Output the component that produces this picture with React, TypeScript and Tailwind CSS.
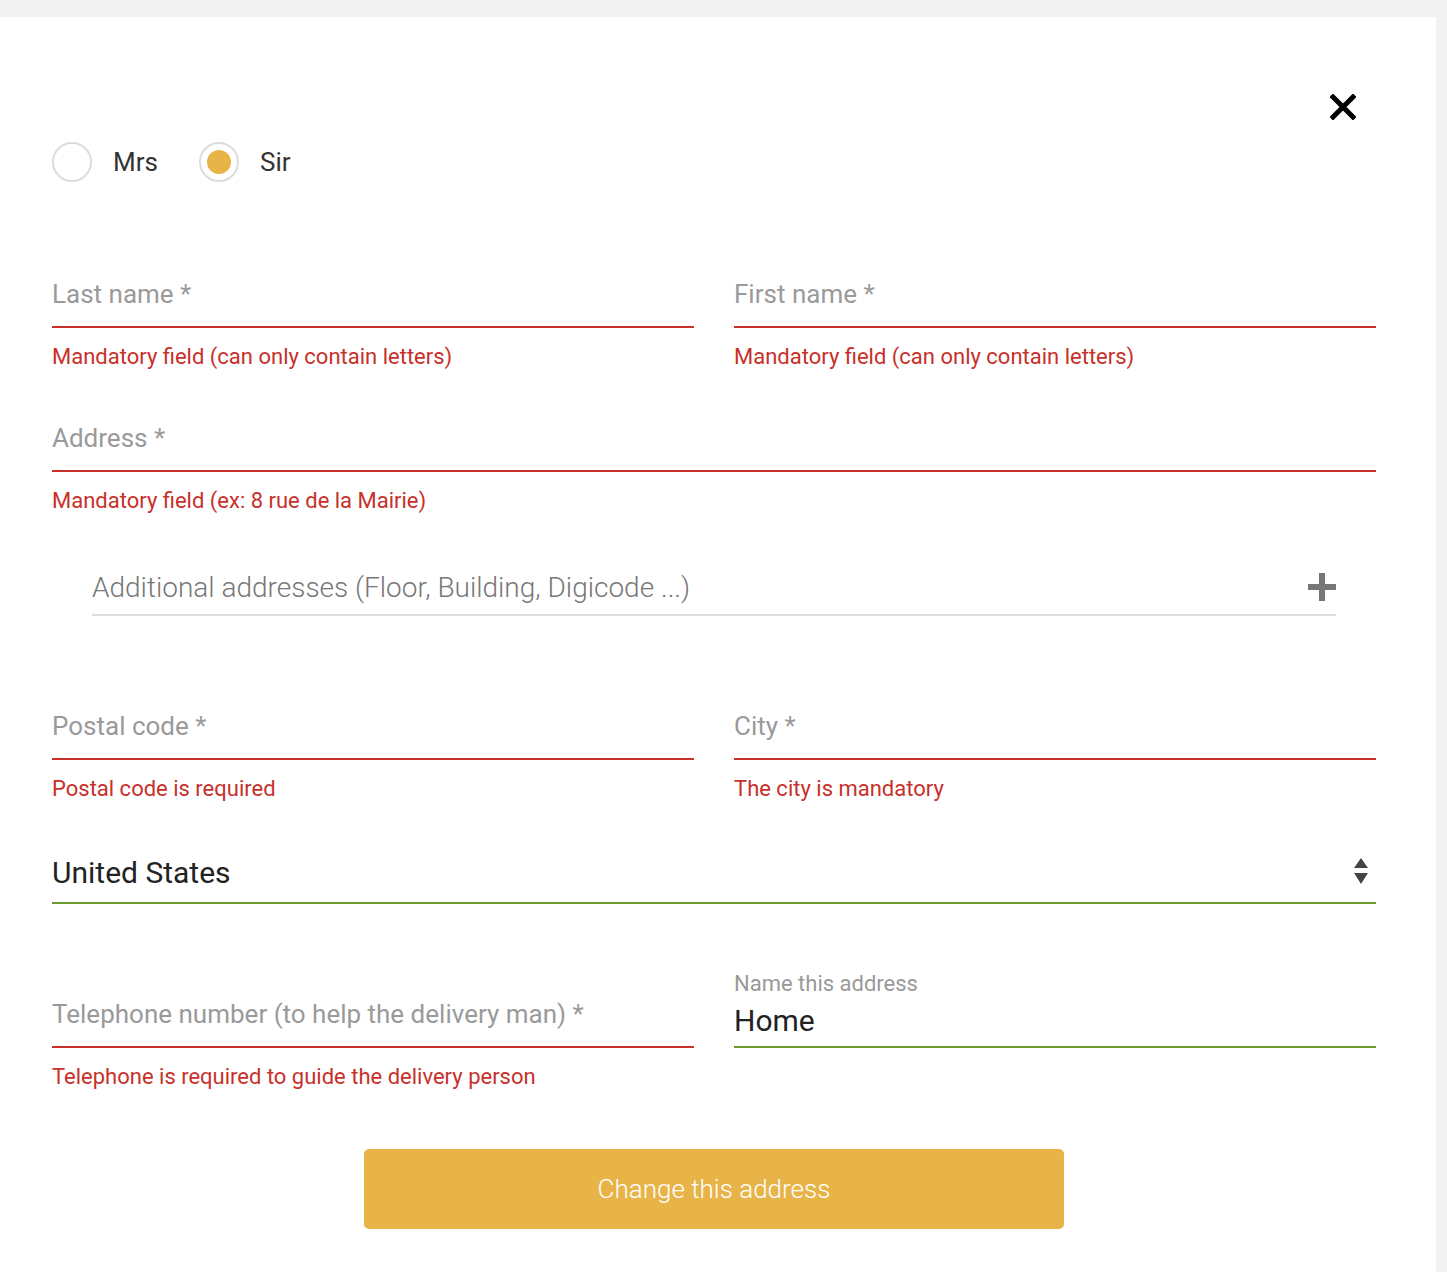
import React from 'react';

// ============================================
// Address Form
// ============================================

const font = { fontFamily: 'Roboto, "Liberation Sans", sans-serif' };

interface FieldProps {
    label: string;
    error?: string;
}

function Field({ label, error }: FieldProps) {
    return (
        <div className="flex-1 h-[144px]">
            <div className="h-[62px] border-b-2 border-[#c8302a] pt-[13px]">
                <span className="text-[26px] leading-[30px] text-[#9a9a9a]">{label}</span>
            </div>
            {error && (
                <p className="mt-[16px] text-[22px] leading-[26px] text-[#c8302a]">{error}</p>
            )}
        </div>
    );
}

function Radio({ label, checked }: { label: string; checked?: boolean }) {
    return (
        <label className="flex items-center gap-[21px]">
            <span className="w-[40px] h-[40px] rounded-full border-2 border-[#dcdcdc] flex items-center justify-center">
                {checked && <span className="w-[24px] h-[24px] rounded-full bg-[#e8b347]" />}
            </span>
            <span className="text-[26px] leading-[30px] text-[#333]">{label}</span>
        </label>
    );
}

export default function App() {
    return (
        <div className="min-h-[1272px] bg-[#f2f2f2] pt-[17px] pr-[11px]" style={font}>
            <div className="relative bg-white min-h-[1255px] pt-[125px] pl-[52px] pr-[60px]">
                {/* Close */}
                <button className="absolute top-[77px] right-[80px] w-[26px] h-[26px]">
                    <svg viewBox="0 0 26 26" className="w-[26px] h-[26px]">
                        <path d="M3 3 L23 23 M23 3 L3 23" stroke="#000" strokeWidth="5" strokeLinecap="square" />
                    </svg>
                </button>

                {/* Gender */}
                <div className="flex items-center gap-[41px] h-[40px]">
                    <Radio label="Mrs" />
                    <Radio label="Sir" checked />
                </div>

                <div className="mt-[84px]">
                    <div className="flex gap-[40px]">
                        <Field label="Last name *" error="Mandatory field (can only contain letters)" />
                        <Field label="First name *" error="Mandatory field (can only contain letters)" />
                    </div>

                    <Field label="Address *" error="Mandatory field (ex: 8 rue de la Mairie)" />

                    {/* Additional */}
                    <div className="h-[144px] px-[40px]">
                        <div className="h-[62px] border-b-2 border-[#dcdcdc] pt-[18px] flex items-start justify-between">
                            <span className="text-[28px] leading-[32px] font-light text-[#777]">
                                Additional addresses (Floor, Building, Digicode ...)
                            </span>
                            <svg viewBox="0 0 28 28" className="w-[28px] h-[28px] mt-[1px]">
                                <path d="M14 0 V28 M0 14 H28" stroke="#777" strokeWidth="6" />
                            </svg>
                        </div>
                    </div>

                    <div className="flex gap-[40px]">
                        <Field label="Postal code *" error="Postal code is required" />
                        <Field label="City *" error="The city is mandatory" />
                    </div>

                    {/* Country */}
                    <div className="h-[144px]">
                        <div className="h-[62px] border-b-2 border-[#6b9a31] pt-[13px] flex items-start justify-between">
                            <span className="text-[30px] leading-[36px] text-[#222]">United States</span>
                            <svg viewBox="0 0 14 28" className="w-[14px] h-[28px] mt-[3px] mr-[8px]">
                                <path d="M7 0 L14 10 H0 Z M0 15 H14 L7 26 Z" fill="#444" />
                            </svg>
                        </div>
                    </div>

                    <div className="flex gap-[40px]">
                        <Field label="Telephone number (to help the delivery man) *" error="Telephone is required to guide the delivery person" />
                        <div className="flex-1">
                            <div className="-mt-[15px] h-[77px] border-b-2 border-[#6b9a31] flex flex-col">
                                <span className="text-[22px] leading-[26px] text-[#999]">Name this address</span>
                                <span className="mt-[6px] text-[30px] leading-[36px] text-[#222]">Home</span>
                            </div>
                        </div>
                    </div>

                    <div className="mt-[19px] flex justify-center">
                        <button className="w-[700px] h-[80px] rounded-[5px] bg-[#e8b347] text-white text-[26px] font-light">
                            Change this address
                        </button>
                    </div>
                </div>
            </div>
        </div>
    );
}
